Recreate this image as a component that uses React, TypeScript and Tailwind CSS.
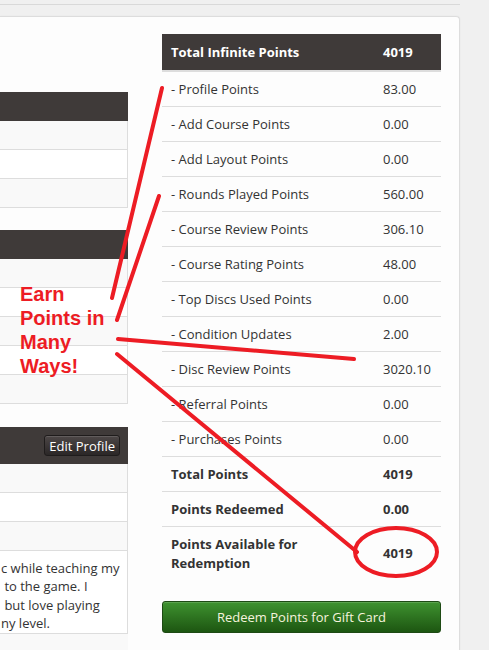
import React from 'react'

type PointRow = { label: string; value: string; bold?: boolean }

const rows: PointRow[] = [
  { label: '- Profile Points', value: '83.00' },
  { label: '- Add Course Points', value: '0.00' },
  { label: '- Add Layout Points', value: '0.00' },
  { label: '- Rounds Played Points', value: '560.00' },
  { label: '- Course Review Points', value: '306.10' },
  { label: '- Course Rating Points', value: '48.00' },
  { label: '- Top Discs Used Points', value: '0.00' },
  { label: '- Condition Updates', value: '2.00' },
  { label: '- Disc Review Points', value: '3020.10' },
  { label: '- Referral Points', value: '0.00' },
  { label: '- Purchases Points', value: '0.00' },
  { label: 'Total Points', value: '4019', bold: true },
  { label: 'Points Redeemed', value: '0.00', bold: true },
]

function StripedRows({ count, start = 0 }: { count: number; start?: number }) {
  return (
    <>
      {Array.from({ length: count }).map((_, i) => (
        <div
          key={i}
          className={`h-[29px] border-b border-r border-[#dddddd] ${(i + start) % 2 === 0 ? 'bg-[#f9f9f9]' : 'bg-white'}`}
        />
      ))}
    </>
  )
}

export default function App() {
  return (
    <div className="relative min-h-screen overflow-hidden bg-[#f0f0f0] font-['Open_Sans',sans-serif] text-[13px] text-[#333333]">
      {/* breadcrumb strip */}
      <div className="h-[4px]" />
      <div className="h-[12px] w-[460px] border-t border-[#d9d9d9]" />

      {/* main panel */}
      <div className="flex w-[460px] rounded-tr-[4px] border-t border-r border-[#dddddd] bg-[#fdfdfd] pt-[17px] pr-[18px] shadow-[0_0_2px_rgba(0,0,0,0.05)]">
        {/* left column, cut off by the window */}
        <div className="mt-[58px] w-[128px] shrink-0">
          <div className="h-[29px] bg-[#3f3a39]" />
          <StripedRows count={3} />

          <div className="mt-[22px] h-[29px] bg-[#3f3a39]" />
          <StripedRows count={5} />

          <div className="mt-[23px] flex h-[37px] items-center justify-end bg-[#3f3a39] pr-[8px]">
            <button className="h-[21px] rounded-[3px] border border-[#1f1c1c] bg-gradient-to-b from-[#4d4747] to-[#2b2727] px-[4px] pt-[1px] text-[13px] leading-none text-white shadow-[inset_0_1px_0_rgba(255,255,255,0.12)]">
              Edit Profile
            </button>
          </div>
          <StripedRows count={3} />
          <div className="h-[83px] border-b border-r border-[#dddddd] bg-white pt-[8px] leading-[18.4px] whitespace-nowrap">
            <div className="pl-[1px]">c while teaching my</div>
            <div className="pl-[1px]">&nbsp;to the game. I</div>
            <div className="pl-[1px]">&nbsp;but love playing</div>
            <div className="pl-[1px]">ny level.</div>
          </div>
          <div className="h-[29px] bg-[#f9f9f9]" />
        </div>

        {/* points table */}
        <div className="ml-[34px] w-[279px] shrink-0">
          <div className="flex h-[34px] items-center border-b-2 border-[#dddddd] bg-[#3f3a39] pt-[2px] font-bold text-white box-content">
            <div className="w-[213px] pl-[9px]">Total Infinite Points</div>
            <div className="pl-[8px]">4019</div>
          </div>
          {rows.map((r) => (
            <div
              key={r.label}
              className={`flex h-[35px] items-center border-b border-[#dddddd] pt-[2px] ${r.bold ? 'font-bold' : ''}`}
            >
              <div className="w-[213px] pl-[9px]">{r.label}</div>
              <div className="pl-[8px]">{r.value}</div>
            </div>
          ))}
          <div className="flex items-center pt-[8px] pb-[8px] font-bold leading-[18.5px]">
            <div className="w-[213px] pl-[9px] pr-[8px]">Points Available for Redemption</div>
            <div className="pl-[8px]">4019</div>
          </div>
          <button className="mt-[21px] mb-[40px] h-[32px] w-full rounded-[3px] border border-[#1e4a14] bg-gradient-to-b from-[#3f9330] to-[#1d5611] pt-[2px] text-[13px] text-[#f6f4de] shadow-[inset_0_1px_0_rgba(255,255,255,0.15)]">
            Redeem Points for Gift Card
          </button>
        </div>
      </div>

      {/* red annotation drawn over the page */}
      <svg
        className="pointer-events-none absolute left-0 top-0"
        width={489}
        height={650}
        viewBox="0 0 489 650"
      >
        <g stroke="#ed1c24" strokeWidth={4} strokeLinecap="round" fill="none">
          <line x1={162} y1={88} x2={112} y2={298} />
          <line x1={159} y1={196} x2={117} y2={320} />
          <line x1={118} y1={339} x2={354} y2={359} />
          <line x1={117} y1={354} x2={357} y2={552} />
          <ellipse cx={396} cy={552} rx={41} ry={24} />
        </g>
      </svg>
      <div className="pointer-events-none absolute left-[20px] top-[282px] font-['Liberation_Sans',Arial,sans-serif] text-[20px] font-bold leading-[24px] text-[#ed1c24]">
        Earn
        <br />
        Points in
        <br />
        Many
        <br />
        Ways!
      </div>
    </div>
  )
}
